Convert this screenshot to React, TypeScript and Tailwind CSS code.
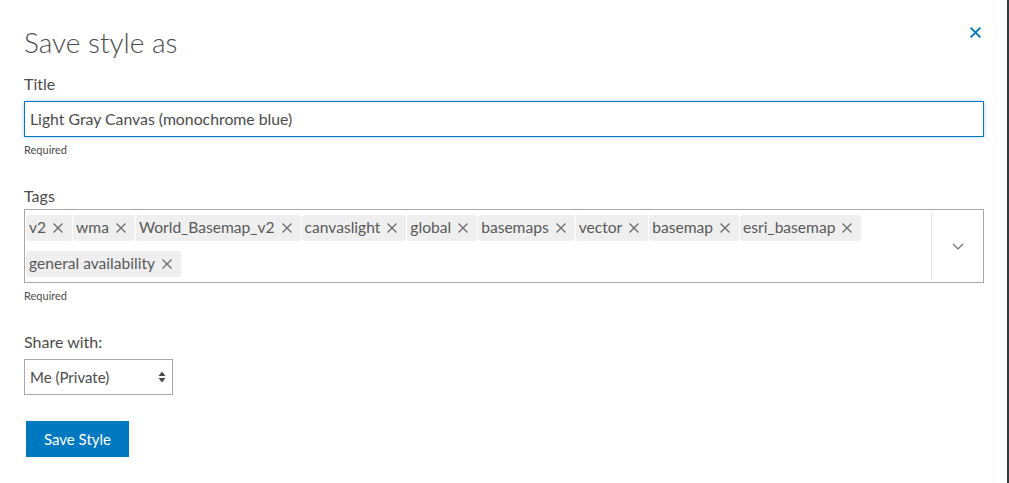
const tags = [
  'v2',
  'wma',
  'World_Basemap_v2',
  'canvaslight',
  'global',
  'basemaps',
  'vector',
  'basemap',
  'esri_basemap',
  'general availability',
];

function SmallX({ className, width = 1.4 }: { className?: string; width?: number }) {
  return (
    <svg viewBox="0 0 12 12" className={className} fill="none" stroke="currentColor" strokeWidth={width}>
      <path d="M1.5 1.5l9 9M10.5 1.5l-9 9" />
    </svg>
  );
}

export default function App() {
  return (
    <div className="flex h-[483px] w-[1009px] bg-white font-['Lato',sans-serif] text-[#4c4c4c]">
      <div className="relative flex-1 pl-6 pt-[26px]">
        {/* Close */}
        <button className="absolute right-[25px] top-[26px] text-[#0079c1]">
          <SmallX className="h-[13px] w-[13px]" width={1.8} />
        </button>

        <h2 className="text-[28px] font-light leading-8 text-[#4c4c4c]">Save style as</h2>

        {/* Title */}
        <label className="mt-4 block text-base leading-5">Title</label>
        <div className="mt-[7px] flex h-9 w-[960px] items-center border border-[#0079c1] px-[5px] text-[15.8px] text-[#4c4c4c] shadow-[0_0_4px_rgba(0,121,193,0.35)]">
          Light Gray Canvas (monochrome blue)
        </div>
        <div className="mt-[5px] text-[11px] leading-4">Required</div>

        {/* Tags */}
        <label className="mt-7 block text-base leading-5">Tags</label>
        <div className="mt-[3px] flex h-[74px] w-[960px] border border-[#a9a9a9]">
          <div className="flex flex-1 flex-wrap content-start gap-x-px gap-y-[10px] py-[5px] pl-px">
            {tags.map((t) => (
              <span
                key={t}
                className="flex h-[26px] items-center gap-[6px] rounded-[3px] bg-[#efefef] pl-[3px] pr-[8px] text-[15.6px] text-[#595959]"
              >
                {t}
                <SmallX className="h-[12px] w-[12px] text-[#6e6e6e]" width={1.4} />
              </span>
            ))}
          </div>
          <div className="my-[2px] flex w-[52px] items-center justify-center border-l border-[#e6e6e6]">
            <svg viewBox="0 0 12 7" className="h-[7px] w-[12px] text-[#707070]" fill="none" stroke="currentColor" strokeWidth="1.2">
              <path d="M1 1l5 5 5-5" />
            </svg>
          </div>
        </div>
        <div className="mt-[5px] text-[11px] leading-4">Required</div>

        {/* Share with */}
        <label className="mt-7 block text-base leading-5">Share with:</label>
        <div className="mt-[7px] flex h-9 w-[149px] items-center justify-between border border-[#a9a9a9] pl-[5px] pr-[6px] text-[15px] text-[#4c4c4c]">
          <span>Me (Private)</span>
          <svg viewBox="0 0 8 12" className="h-3 w-2 text-[#4c4c4c]" fill="currentColor">
            <path d="M4 0.5L7.5 5H0.5z M4 11.5L0.5 7H7.5z" />
          </svg>
        </div>

        <button className="ml-[2px] mt-[26px] flex h-9 w-[103px] items-center justify-center bg-[#0079c1] text-[15px] text-white">
          Save Style
        </button>
      </div>
      <div className="w-[2px] bg-[#2f3b3c]" />
    </div>
  );
}
